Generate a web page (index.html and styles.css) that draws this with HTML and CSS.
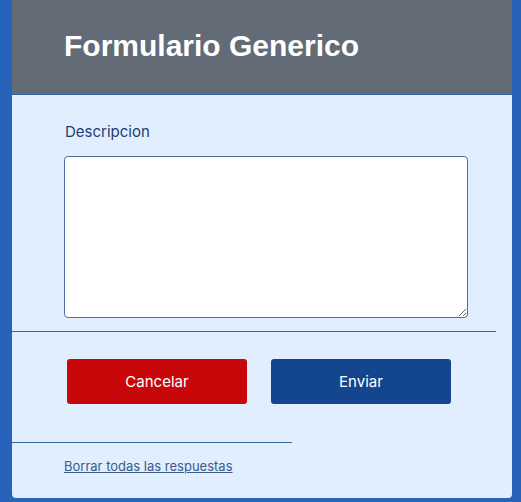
FILE: index.html
```html
<!DOCTYPE html>
<html lang="es">
<head>
<meta charset="utf-8">
<link rel="stylesheet" href="styles.css">
</head>
<body>
<div class="page">
  <div class="card">
    <header class="head">
      <h1 class="title">Formulario Generico</h1>
    </header>
    <div class="field">
      <label class="label" for="desc">Descripcion</label>
      <textarea id="desc" class="area"></textarea>
    </div>
    <div class="rule rule-long"></div>
    <div class="actions">
      <button class="btn btn-cancel">Cancelar</button>
      <button class="btn btn-send">Enviar</button>
    </div>
    <div class="rule rule-short"></div>
    <div class="foot">
      <a class="link" href="#">Borrar todas las respuestas</a>
    </div>
  </div>
</div>
</body>
</html>
```

FILE: styles.css
```css
html, body {
  margin: 0;
  padding: 0;
  background: #2763bb;
  height: 100%;
}
.page {
  padding-left: 12px;
}
.card {
  width: 500px;
  height: 498px;
  background: #e1eefe;
  border-radius: 0 0 4px 4px;
  box-sizing: border-box;
  font-family: Inter, "Noto Sans", sans-serif;
}
.head {
  height: 94px;
  background: #636b77;
  border-bottom: 1px solid #2f63a8;
  display: flex;
  align-items: center;
  padding-left: 52px;
}
.title {
  margin: 0;
  font-family: "Liberation Sans", Arial, sans-serif;
  font-weight: bold;
  font-size: 30px;
  color: #ffffff;
  position: relative;
  top: -1px;
}
.field {
  padding: 27px 0 0 52px;
  display: flex;
  flex-direction: column;
}
.label {
  font-size: 15px;
  line-height: 20px;
  color: #1f3e74;
  margin-left: 1px;
  margin-bottom: 14px;
}
.area {
  width: 404px;
  height: 162px;
  box-sizing: border-box;
  border: 1px solid #4e6f9c;
  border-radius: 4px;
  background: #ffffff;
  margin: 0;
  padding: 4px;
  font-family: inherit;
}
.rule {
  height: 1px;
  background: #3a66a0;
}
.rule-long {
  width: 484px;
  margin-top: 13px;
}
.rule-short {
  width: 280px;
}
.actions {
  display: flex;
  gap: 24px;
  padding: 27px 0 38px 55px;
}
.btn {
  width: 180px;
  height: 45px;
  border: none;
  border-radius: 3px;
  color: #ffffff;
  font-family: Inter, "Noto Sans", sans-serif;
  font-size: 15px;
  padding: 0;
}
.btn-cancel {
  background: #c8070b;
}
.btn-send {
  background: #13468e;
}
.foot {
  padding: 12px 0 0 52px;
}
.link {
  font-size: 13px;
  line-height: 18px;
  color: #3c5a88;
}
```
